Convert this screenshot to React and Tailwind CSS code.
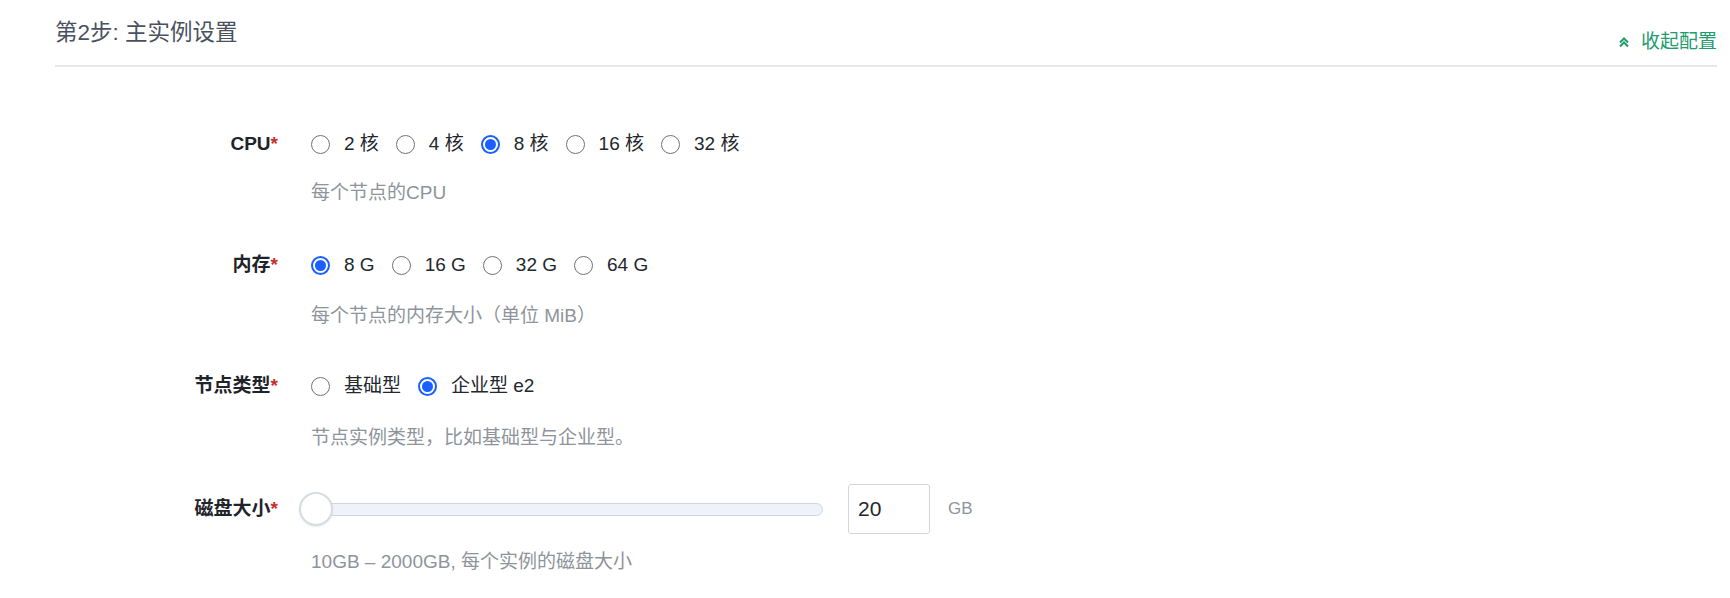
import { useState } from "react";

const font = { fontFamily: '"Liberation Sans", "Noto Sans CJK SC", sans-serif' };

function Radio({ checked, label, onClick }) {
  return (
    <button type="button" onClick={onClick} className="flex items-center mr-[17px] cursor-pointer">
      {checked ? (
        <span className="w-[19px] h-[19px] rounded-full border-2 border-[#1a5fff] flex items-center justify-center">
          <span className="w-[11px] h-[11px] rounded-full bg-[#1a5fff]" />
        </span>
      ) : (
        <span className="w-[19px] h-[19px] rounded-full border-[1.5px] border-[#6f7378]" />
      )}
      <span className="ml-[14px] text-[19px] leading-[30px] text-[#23272e]">{label}</span>
    </button>
  );
}

function Label({ children }) {
  return (
    <div className="w-[223px] shrink-0 text-right text-[19px] leading-[30px] font-semibold text-[#1f242b]">
      {children}
      <span className="text-[#c8312b]">*</span>
    </div>
  );
}

function Help({ children }) {
  return (
    <div className="ml-[256px] text-[19px] leading-[24px] text-[#8e949b]">{children}</div>
  );
}

export default function App() {
  const [cpu, setCpu] = useState("8");
  const [mem, setMem] = useState("8");
  const [type, setType] = useState("e2");
  const [disk, setDisk] = useState("20");

  const cpus = ["2", "4", "8", "16", "32"];
  const mems = ["8", "16", "32", "64"];

  return (
    <div className="w-[1730px] h-[598px] bg-white pl-[55px] pr-[13px]" style={font}>
      {/* Header */}
      <div className="flex justify-between h-[67px] border-b-2 border-[#e6e8e9]">
        <div className="pt-[18px] text-[22.5px] leading-[30px] text-[#4a5261]">第2步: 主实例设置</div>
        <button type="button" className="pt-[30px] flex items-start text-[19px] leading-[24px] text-[#229b6d]">
          <svg width="12" height="24" viewBox="0 0 12 24" className="mr-[11px]">
            <path d="M2 12.5 L6 8.5 L10 12.5 M2 16.5 L6 12.5 L10 16.5" fill="none" stroke="#229b6d" strokeWidth="2" />
          </svg>
          收起配置
        </button>
      </div>

      {/* CPU */}
      <div className="mt-[62px] flex items-center">
        <Label>CPU</Label>
        <div className="ml-[33px] flex items-center">
          {cpus.map((c) => (
            <Radio key={c} checked={cpu === c} label={`${c} 核`} onClick={() => setCpu(c)} />
          ))}
        </div>
      </div>
      <div className="mt-[22px]">
        <Help>每个节点的CPU</Help>
      </div>

      {/* 内存 */}
      <div className="mt-[45px] flex items-center">
        <Label>内存</Label>
        <div className="ml-[33px] flex items-center">
          {mems.map((m) => (
            <Radio key={m} checked={mem === m} label={`${m} G`} onClick={() => setMem(m)} />
          ))}
        </div>
      </div>
      <div className="mt-[24px]">
        <Help>每个节点的内存大小（单位 MiB）</Help>
      </div>

      {/* 节点类型 */}
      <div className="mt-[43px] flex items-center">
        <Label>节点类型</Label>
        <div className="ml-[33px] flex items-center">
          <Radio checked={type === "basic"} label="基础型" onClick={() => setType("basic")} />
          <Radio checked={type === "e2"} label="企业型 e2" onClick={() => setType("e2")} />
        </div>
      </div>
      <div className="mt-[25px]">
        <Help>节点实例类型，比如基础型与企业型。</Help>
      </div>

      {/* 磁盘大小 */}
      <div className="mt-[34px] flex items-center h-[50px]">
        <Label>磁盘大小</Label>
        <div className="ml-[21px] flex items-center">
          <div className="relative w-[524px] h-[34px] flex items-center">
            <div className="w-full h-[13px] rounded-full bg-[#eef2f9] border-[1.5px] border-[#cfd6df]" />
            <div className="absolute left-0 top-0 w-[34px] h-[34px] rounded-full bg-white border-2 border-[#d6dde2] shadow-[0_1px_2px_rgba(0,0,0,0.08)]" />
          </div>
          <input
            value={disk}
            onChange={(e) => setDisk(e.target.value)}
            className="ml-[25px] w-[82px] h-[50px] border-[1.5px] border-[#d3d7db] rounded-[3px] pl-[9px] text-[21px] text-[#23272e] outline-none"
            style={font}
          />
          <span className="ml-[18px] text-[17px] text-[#8e949b]">GB</span>
        </div>
      </div>
      <div className="mt-[16px]">
        <Help>10GB – 2000GB, 每个实例的磁盘大小</Help>
      </div>
    </div>
  );
}
